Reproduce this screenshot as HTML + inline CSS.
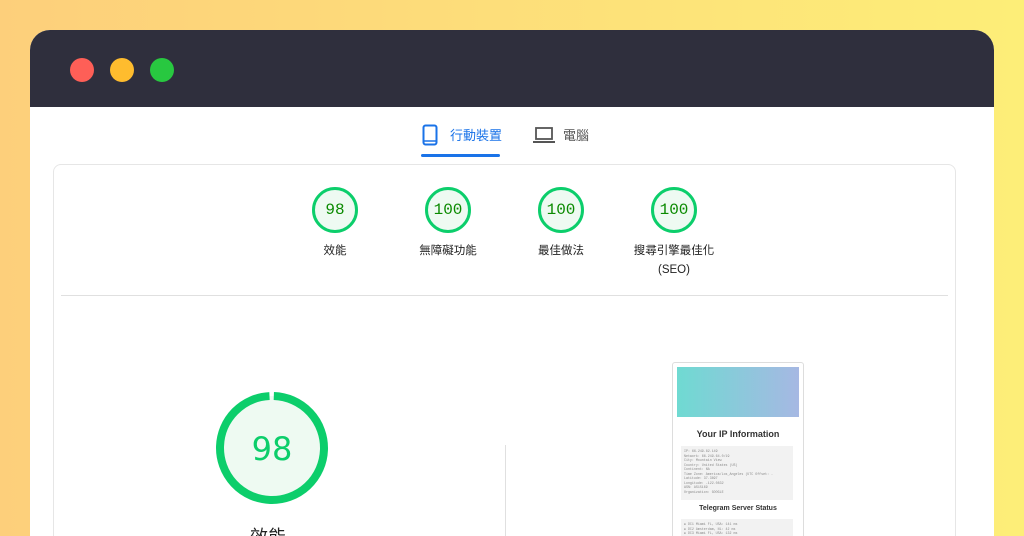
<!DOCTYPE html>
<html style="width:1024px;height:536px;overflow:hidden"><head><meta charset="utf-8"><style>
*{margin:0;padding:0;box-sizing:border-box}
body{width:1024px;height:536px;overflow:hidden;background:linear-gradient(90deg,#fdcf7b,#fdee78);font-family:"Liberation Sans","Noto Sans CJK TC",sans-serif;position:relative}
.win{position:absolute;left:30px;top:30px;width:964px;height:506px;background:#fff;border-radius:20px 20px 0 0;overflow:hidden}
.bar{height:77px;background:#2f2f3d;position:relative}
.dot{position:absolute;top:28px;width:24px;height:24px;border-radius:50%}
.ab{position:absolute}
.tab{position:absolute;top:96px;font-size:13px}
.card{position:absolute;left:23px;top:134px;width:903px;height:450px;border:1px solid #e6e6e6;border-radius:8px}
.g{position:absolute;width:46px;height:46px;border-radius:50%;border:3px solid #0cce6b;background:#eefaf2;color:#0a8a00;font-family:"Liberation Mono",monospace;font-size:16px;text-align:center;line-height:40px}
.lbl{position:absolute;width:120px;text-align:center;font-size:11.5px;color:#222;line-height:19px}
.mono{font-family:"Liberation Mono",monospace;font-size:3.3px;color:#888;line-height:4.5px;white-space:pre}
</style></head><body>
<div class="win">
 <div class="bar">
  <div class="dot" style="left:40px;background:#fe5f57"></div>
  <div class="dot" style="left:80px;background:#febc2e"></div>
  <div class="dot" style="left:120px;background:#28c840"></div>
 </div>
 <svg class="ab" style="left:392px;top:94px" width="16" height="22" viewBox="0 0 16 22"><rect x="1.5" y="1.5" width="13" height="19" rx="2" fill="none" stroke="#1a73e8" stroke-width="2"/><line x1="2" y1="17" x2="14" y2="17" stroke="#1a73e8" stroke-width="1.5"/></svg>
 <div class="tab" style="left:420px;top:95px;color:#1a73e8">行動裝置</div>
 <div class="ab" style="left:391px;top:124px;width:79px;height:3px;background:#1a73e8;border-radius:2px"></div>
 <svg class="ab" style="left:503px;top:96px" width="22" height="18" viewBox="0 0 22 18"><rect x="3" y="2" width="16" height="11" fill="none" stroke="#555" stroke-width="1.8"/><line x1="0" y1="16" x2="22" y2="16" stroke="#555" stroke-width="2"/></svg>
 <div class="tab" style="left:533px;top:95px;color:#555">電腦</div>
 <div class="card">
  <div class="g" style="left:258px;top:22px">98</div>
  <div class="g" style="left:371px;top:22px">100</div>
  <div class="g" style="left:484px;top:22px">100</div>
  <div class="g" style="left:597px;top:22px">100</div>
  <div class="lbl" style="left:221px;top:77px">效能</div>
  <div class="lbl" style="left:334px;top:77px">無障礙功能</div>
  <div class="lbl" style="left:447px;top:77px">最佳做法</div>
  <div class="lbl" style="left:560px;top:77px">搜尋引擎最佳化<br>(SEO)</div>
  <div class="ab" style="left:7px;top:130px;width:887px;height:1px;background:#e0e0e0"></div>
  <div class="ab" style="left:451px;top:280px;width:1px;height:200px;background:#e0e0e0"></div>
  <svg class="ab" style="left:160px;top:225px" width="116" height="116" viewBox="0 0 116 116">
   <circle cx="58" cy="58" r="52" fill="#eefaf2"/>
   <circle cx="58" cy="58" r="52" fill="none" stroke="#0cce6b" stroke-width="8" stroke-dasharray="322 4.7" transform="rotate(-88 58 58)"/>
   <text x="58" y="70" text-anchor="middle" font-family="DejaVu Sans,sans-serif" font-size="32" fill="#0cce6b">98</text>
  </svg>
  <div class="ab" style="left:196px;top:358px;font-size:18px;color:#222">效能</div>
  <div class="ab" style="left:618px;top:197px;width:132px;height:260px;border:1px solid #ddd;border-radius:3px;background:#fff">
   <div class="ab" style="left:4px;top:4px;width:122px;height:50px;background:linear-gradient(90deg,#6fdad2,#a6b8e3)"></div>
   <div class="ab" style="left:0;top:66px;width:130px;text-align:center;font-size:9px;font-weight:bold;color:#333">Your IP Information</div>
   <div class="ab mono" style="left:8px;top:83px;width:112px;height:54px;background:#f2f2f2;padding:3px;overflow:hidden">IP: 66.249.82.149
Network: 66.249.64.0/19
City: Mountain View
Country: United States (US)
Continent: NA
Time Zone: America/Los_Angeles (UTC Offset: -
Latitude: 37.3897
Longitude: -122.0832
ASN: AS15169
Organization: GOOGLE</div>
   <div class="ab" style="left:0;top:142px;width:130px;text-align:center;font-size:7px;font-weight:bold;color:#333">Telegram Server Status</div>
   <div class="ab mono" style="left:8px;top:156px;width:112px;height:40px;background:#f2f2f2;padding:3px">● DC1 Miami FL, USA: 141 ms
● DC2 Amsterdam, NL: 42 ms
● DC3 Miami FL, USA: 132 ms</div>
  </div>
 </div>
</div>
</body></html>
